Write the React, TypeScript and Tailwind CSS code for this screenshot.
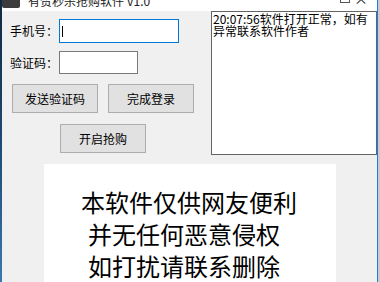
const cjk = { fontFamily: '"Microsoft YaHei", "Noto Sans CJK SC", sans-serif' };
const mono = { fontFamily: '"SimSun", "Noto Sans CJK SC", sans-serif' };

const Btn = ({ label }: { label: string }) => (
  <button className="w-[86px] h-[29px] border border-[#adadad] bg-[#e1e1e1] text-[12px] text-black leading-none">
    {label}
  </button>
);

export default function App() {
  return (
    <div className="w-[380px] h-[282px] flex overflow-hidden bg-[#f0f0f0]" style={cjk}>
      {/* desktop strip + window edge */}
      <div className="w-[2px] bg-gradient-to-b from-[#102a44] via-[#1d4a72] to-[#3a78b0]" />

      <div className="flex-1 flex flex-col min-w-0">
        {/* title bar, cut at top */}
        <div className="h-[11px] bg-white flex items-end overflow-hidden relative">
          <div className="w-[18px] h-[12px] bg-[#3c3c3c] rounded-[2px] mt-[-4px] self-start" />
          <span className="ml-[8px] text-[12px] leading-[12px] text-[#222] whitespace-nowrap mt-[-5px] self-start">
            有赞秒杀抢购软件 V1.0
          </span>
          <span className="absolute left-[338px] top-[-7px] w-[10px] h-[10px] border border-[#555]" />
          <span className="absolute left-[352px] top-[-9px] text-[14px] leading-[14px] text-[#333]">×</span>
        </div>

        <div className="flex-1 flex flex-col">
          <div className="flex h-[144px]">
            {/* left form */}
            <div className="w-[209px] flex flex-col">
              <div className="flex items-center mt-[8px]">
                <span className="ml-[8px] w-[49px] text-[12px] text-black">手机号：</span>
                <div className="w-[120px] h-[24px] border border-[#0078d7] bg-white flex items-center">
                  <div className="ml-[2px] w-px h-[11px] bg-black" />
                </div>
              </div>
              <div className="flex items-center mt-[8px]">
                <span className="ml-[8px] w-[49px] text-[12px] text-black">验证码：</span>
                <div className="w-[79px] h-[23px] border border-[#7a7a7a] bg-white" />
              </div>
              <div className="flex gap-[10px] mt-[10px] ml-[10px]">
                <Btn label="发送验证码" />
                <Btn label="完成登录" />
              </div>
              <div className="mt-[11px] ml-[58px]">
                <Btn label="开启抢购" />
              </div>
            </div>

            {/* log box */}
            <div className="flex-1 border border-[#646464] bg-white pl-[1px] pt-[1px] text-[12px] leading-[12px] text-black" style={mono}>
              <div className="whitespace-nowrap">20:07:56软件打开正常，如有</div>
              <div className="whitespace-nowrap">异常联系软件作者</div>
            </div>
          </div>

          {/* notice panel */}
          <div className="flex-1 mt-[9px] ml-[42px] w-[292px] bg-white pt-[22px] pl-[37px] text-[24px] leading-[32px] text-black">
            <div className="whitespace-nowrap">本软件仅供网友便利</div>
            <div className="whitespace-nowrap pl-[7px]">并无任何恶意侵权</div>
            <div className="whitespace-nowrap pl-[7px]">如打扰请联系删除</div>
          </div>
        </div>
      </div>

      <div className="w-px bg-[#2b79d0]" />
      <div className="w-[2px] bg-[#c8ccd0]" />
    </div>
  );
}
